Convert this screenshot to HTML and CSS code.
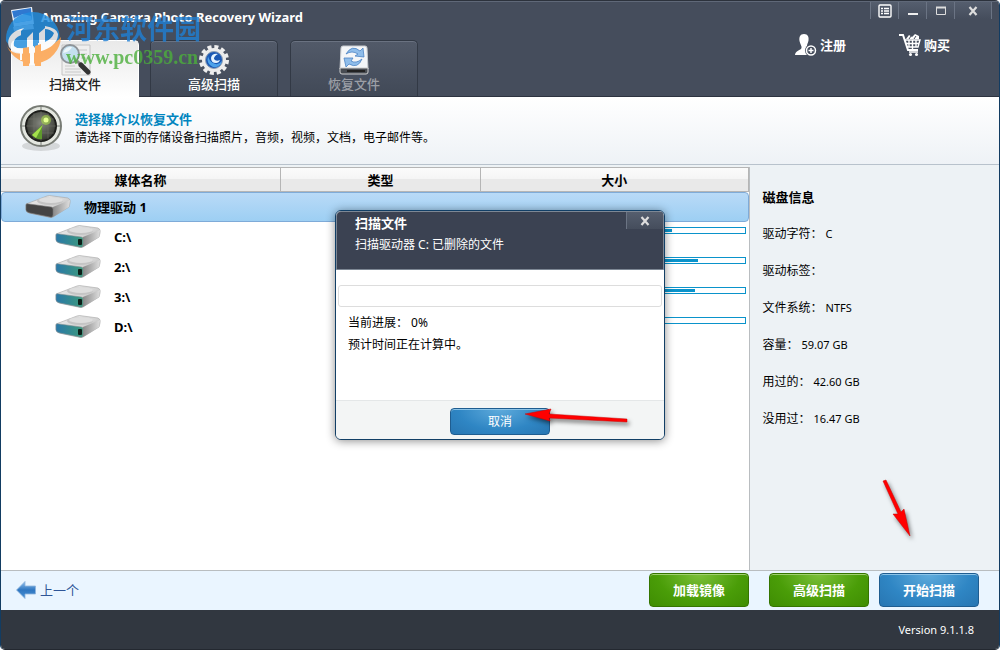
FILE: index.html
```html
<!DOCTYPE html>
<html lang="zh-CN">
<head>
  <meta charset="utf-8">
  <meta name="viewport" content="width=device-width, initial-scale=1.0">
  <title>Amazing Camera Photo Recovery Wizard</title>
  <link rel="stylesheet" href="styles.css">
</head>
<body>
<!-- shared shapes -->
<svg class="defs" width="0" height="0" aria-hidden="true">
  <defs>
    <linearGradient id="silver" x1="0" y1="0" x2="1" y2="1">
      <stop offset="0" stop-color="#f0f0f0"/><stop offset=".55" stop-color="#d2d2d2"/><stop offset="1" stop-color="#8f8f8f"/>
    </linearGradient>
    <linearGradient id="teal" x1="0" y1="0" x2="1" y2="0">
      <stop offset="0" stop-color="#2a78a8"/><stop offset="1" stop-color="#3c9a7c"/>
    </linearGradient>
    <linearGradient id="side" x1="0" y1="0" x2="1" y2="0">
      <stop offset="0" stop-color="#8a8a8a"/><stop offset="1" stop-color="#dedede"/>
    </linearGradient>
    <linearGradient id="arrowBlue" x1="0" y1="0" x2="0" y2="1">
      <stop offset="0" stop-color="#8fc0ee"/><stop offset=".5" stop-color="#2f76c0"/><stop offset="1" stop-color="#4a92d6"/>
    </linearGradient>
    <radialGradient id="lens" cx=".5" cy=".4" r=".6">
      <stop offset="0" stop-color="#85887f"/><stop offset="1" stop-color="#33352f"/>
    </radialGradient>
    <symbol id="drive-body" viewBox="0 0 46 24">
      <path d="M1 9 L22 1 Q24 0 28 1 L43 3 Q46 4 45 8 L44 12 L28 22 Q26 23 23 22 L4 18 Q1 17 1 14Z" fill="url(#silver)" stroke="#a4a4a4" stroke-width=".6"/>
      <path d="M28 12 L45 5 L44 12 L28 22Z" fill="url(#side)"/>
      <ellipse cx="25" cy="6" rx="13" ry="4" fill="#c4c4c4"/>
      <ellipse cx="26" cy="5" rx="12" ry="3" fill="#dedede"/>
    </symbol>
    <symbol id="drive" viewBox="0 0 46 24">
      <use href="#drive-body"/>
      <path d="M1 10 Q1 8 4 9 L26 12 Q28 12 28 14 L28 20 Q28 23 25 22 L5 18 Q1 17 1 15Z" fill="url(#teal)" stroke="#7e8e92" stroke-width=".6"/>
      <rect x="23" y="14" width="4" height="6" rx="1" fill="#0b1f18"/>
    </symbol>
    <symbol id="disk" viewBox="0 0 46 24">
      <use href="#drive-body"/>
      <path d="M1 10 Q1 8 4 9 L26 12 Q28 12 28 14 L28 20 Q28 23 25 22 L5 18 Q1 17 1 15Z" fill="#444" stroke="#777" stroke-width=".6"/>
    </symbol>
  </defs>
</svg>

<div class="window">
  <header class="header">
    <div class="header-left">
      <div class="title">
        <svg class="app-icon" width="24" height="24" viewBox="0 0 24 24" aria-hidden="true">
          <path d="M0 3 L21 0 L23 17 L3 20Z" fill="#f2f5fa"/>
          <path d="M1 4 L20 1 L21 13 L4 16Z" fill="#2f78d0"/>
          <path d="M3 11 L12 7 L20 9 L21 13 L4 16Z" fill="#a9d0f2"/>
          <path d="M2 20 L22 17 L23 22 L3 24Z" fill="#c5cad2"/>
        </svg>
        <h1>Amazing Camera Photo Recovery Wizard</h1>
      </div>
      <nav class="tabs">
        <button class="tab active">
          <svg width="32" height="32" viewBox="0 0 32 32" aria-hidden="true">
            <path d="M3 1 H31 V31 H3Z" fill="#efefef" stroke="#c4c4c4"/>
            <path d="M20 6 H28 M22 10 H28 M22 14 H28 M6 22 H16 M6 25 H22 M6 28 H22" stroke="#c9c9c9"/>
            <path d="M18 17 L23 22" stroke="#888" stroke-width="3"/>
            <path d="M22 21 L29 28" stroke="#333" stroke-width="5" stroke-linecap="round"/>
            <circle cx="11" cy="10" r="9" fill="#b9dcef" fill-opacity=".8" stroke="#8e9499" stroke-width="2"/>
            <path d="M4 9 A8 8 0 0 1 13 3 Q11 8 4 9Z" fill="#fff" fill-opacity=".7"/>
          </svg>
          <span>扫描文件</span>
        </button>
        <button class="tab">
          <svg width="32" height="32" viewBox="0 0 32 32" aria-hidden="true">
            <circle cx="16" cy="16" r="13" fill="none" stroke="#eee" stroke-width="4" stroke-dasharray="4 2.8"/>
            <circle cx="16" cy="16" r="12" fill="#ececec"/>
            <circle cx="16" cy="16" r="8.500" fill="#1a58b4" stroke="#8fa0b4"/>
            <path d="M10 12 Q8 20 15 23 Q22 24 24 17 Q20 22 15 19 Q11 17 10 12Z" fill="#4da2ea"/>
            <path d="M20 10 Q14 9 13 14 Q13 19 18 19 Q21 19 22 16 Q18 18 16 15 Q16 12 20 10Z" fill="#e4f3ff"/>
          </svg>
          <span>高级扫描</span>
        </button>
        <button class="tab" disabled>
          <svg width="32" height="32" viewBox="0 0 32 32" aria-hidden="true">
            <path d="M5 2 H27 Q29 2 29 4 L30 25 H2 L3 4 Q3 2 5 2Z" fill="#f4f6f8" stroke="#c9ccd0"/>
            <path d="M2 24 H30 V28 Q30 30 28 30 H4 Q2 30 2 28Z" fill="#484c52" stroke="#d0d0d0"/>
            <rect x="9" y="26" width="18" height="2" fill="#222"/>
            <path d="M8 10 Q14 0 22 7 L25 4 L26 13 L17 12 L20 10 Q14 6 8 10Z" fill="#8fbdea" stroke="#4c84c4" stroke-width=".8"/>
            <path d="M24 15 Q20 25 11 20 L8 23 L6 14 L15 14 L13 17 Q18 20 24 15Z" fill="#8fbdea" stroke="#4c84c4" stroke-width=".8"/>
          </svg>
          <span>恢复文件</span>
        </button>
      </nav>
    </div>
    <div class="header-right">
      <div class="controls">
        <button class="control" aria-label="Menu">
          <svg width="14" height="14" viewBox="0 0 14 14"><rect x="1" y="1" width="12" height="12" rx="1" fill="none" stroke="#fff" stroke-width="1.4"/><path d="M3 4.5H5M6 4.5H11M3 7H5M6 7H11M3 9.5H5M6 9.5H11" stroke="#fff" stroke-width="1.3"/></svg>
        </button>
        <button class="control" aria-label="Minimize">
          <svg width="12" height="12" viewBox="0 0 12 12"><path d="M1 9H11" stroke="#eee" stroke-width="2"/></svg>
        </button>
        <button class="control" aria-label="Maximize">
          <svg width="12" height="12" viewBox="0 0 12 12"><path d="M1.500 2.500H10.500V9.500H1.500Z" fill="none" stroke="#ddd"/><path d="M1 2.500H11" stroke="#ddd" stroke-width="2"/></svg>
        </button>
        <button class="control close" aria-label="Close">
          <svg width="10" height="10" viewBox="0 0 10 10"><path d="M1.500 1L8.500 9M8.500 1L1.500 9" stroke="#ddd" stroke-width="2.200"/></svg>
        </button>
      </div>
      <div class="links">
        <a href="#register">
          <svg width="24" height="24" viewBox="0 0 24 24" aria-hidden="true">
            <path d="M10 1 C14 1 15 4 14.500 7.500 C14 10 13 11 13 13 C13 15 17 16 18 18 V22 H1 C1 18 7 17 7.500 15 C8 13 6 11 5.500 8 C5 4 6 1 10 1Z" fill="#fff"/>
            <circle cx="17" cy="17.500" r="6" fill="#454d5c"/>
            <circle cx="17" cy="17.500" r="4.500" fill="#454d5c" stroke="#fff" stroke-width="1.500"/>
            <path d="M17 15V20M14.500 17.500H19.500" stroke="#fff" stroke-width="1.500"/>
          </svg>
          注册
        </a>
        <a href="#buy">
          <svg width="24" height="24" viewBox="0 0 24 24" aria-hidden="true" fill="none" stroke="#fff">
            <path d="M1 2H5L10 17H20" stroke-width="2"/>
            <path d="M7 7H22L20 14H9M8 10.500H21M11 7V14M14.500 7V16M18 7V14" stroke-width="1.400"/>
            <path d="M8 6L11 2L14 4L17 1L21 3L21 6Z" fill="#fff" stroke="none"/>
            <path d="M11 6L13 3M16 6L18 3" stroke="#454d5c"/>
            <path d="M11 19H20" stroke-width="1.500"/>
            <circle cx="12.500" cy="21.500" r="1.500" fill="#fff" stroke="none"/><circle cx="18.500" cy="21.500" r="1.500" fill="#fff" stroke="none"/>
          </svg>
          购买
        </a>
      </div>
    </div>
  </header>

  <section class="banner">
    <svg width="50" height="52" viewBox="0 0 50 52" aria-hidden="true">
      <ellipse cx="25" cy="45" rx="19" ry="5" fill="#000" fill-opacity=".12"/>
      <circle cx="25" cy="25" r="20" fill="#e4e7e0" stroke="#777b74" stroke-width="2"/>
      <path d="M25 5V45M5 25H45" stroke="#777b74"/>
      <circle cx="25" cy="25" r="15" fill="url(#lens)" stroke="#1d1e1b" stroke-width="2"/>
      <path d="M18 12V38M25 10V40M32 12V38M12 18H38M10 25H40M12 32H38" stroke="#74776c" stroke-width=".5"/>
      <path d="M26 24L16 34Q20 39 26 38Z" fill="#5f9a2c"/>
      <path d="M27 24L16 34L20 37Z" fill="#a4e04c"/>
      <circle cx="30" cy="19" r="5" fill="#a8d84a" fill-opacity=".6"/>
      <circle cx="30" cy="19" r="2.500" fill="#e4ff90"/>
    </svg>
    <div>
      <h2>选择媒介以恢复文件</h2>
      <p>请选择下面的存储设备扫描照片，音频，视频，文档，电子邮件等。</p>
    </div>
  </section>

  <main class="content">
    <div class="media">
      <table>
        <colgroup><col class="col-name"><col class="col-type"><col class="col-size"></colgroup>
        <thead>
          <tr><th scope="col">媒体名称</th><th scope="col">类型</th><th scope="col">大小</th></tr>
        </thead>
        <tbody>
          <tr class="selected">
            <td colspan="3"><div class="name root"><svg width="46" height="24" aria-hidden="true"><use href="#disk"/></svg>物理驱动 1</div></td>
          </tr>
          <tr>
            <td><div class="name"><svg width="46" height="24" aria-hidden="true"><use href="#drive"/></svg>C:\</div></td>
            <td></td>
            <td class="size"><div class="bar"><div class="fill" style="width: 72%"></div></div></td>
          </tr>
          <tr>
            <td><div class="name"><svg width="46" height="24" aria-hidden="true"><use href="#drive"/></svg>2:\</div></td>
            <td></td>
            <td class="size"><div class="bar"><div class="fill" style="width: 82%"></div></div></td>
          </tr>
          <tr>
            <td><div class="name"><svg width="46" height="24" aria-hidden="true"><use href="#drive"/></svg>3:\</div></td>
            <td></td>
            <td class="size"><div class="bar"><div class="fill" style="width: 81%"></div></div></td>
          </tr>
          <tr>
            <td><div class="name"><svg width="46" height="24" aria-hidden="true"><use href="#drive"/></svg>D:\</div></td>
            <td></td>
            <td class="size"><div class="bar"><div class="fill" style="width: 40%"></div></div></td>
          </tr>
        </tbody>
      </table>
    </div>
    <aside class="info">
      <h2>磁盘信息</h2>
      <dl>
        <div><dt>驱动字符：</dt><dd>C</dd></div>
        <div><dt>驱动标签：</dt><dd></dd></div>
        <div><dt>文件系统：</dt><dd>NTFS</dd></div>
        <div><dt>容量：</dt><dd>59.07 GB</dd></div>
        <div><dt>用过的：</dt><dd>42.60 GB</dd></div>
        <div><dt>没用过：</dt><dd>16.47 GB</dd></div>
      </dl>
    </aside>
  </main>

  <div class="actions">
    <a class="back" href="#back">
      <svg width="20" height="18" viewBox="0 0 20 18" aria-hidden="true"><path d="M0.500 9L9 0.500V5H19.500V13H9V17.500Z" fill="url(#arrowBlue)" stroke="#8fb4dc" stroke-width=".8"/></svg>
      上一个
    </a>
    <button class="btn green load">加载镜像</button>
    <button class="btn green">高级扫描</button>
    <button class="btn blue">开始扫描</button>
  </div>
  <footer class="footer">Version 9.1.1.8</footer>
</div>

<div class="dialog" role="dialog" aria-labelledby="dialog-title">
  <div class="dialog-header">
    <div class="dialog-heading">
      <h2 id="dialog-title">扫描文件</h2>
      <p>扫描驱动器 C: 已删除的文件</p>
    </div>
    <button class="control dialog-close" aria-label="Close">
      <svg width="10" height="10" viewBox="0 0 10 10"><path d="M1.500 1L8.500 9M8.500 1L1.500 9" stroke="#ddd" stroke-width="2.200"/></svg>
    </button>
  </div>
  <div class="dialog-body">
    <div class="scan-progress" role="progressbar" aria-valuenow="0" aria-label="当前进展"></div>
    <p>当前进展： 0%</p>
    <p>预计时间正在计算中。</p>
  </div>
  <div class="dialog-footer">
    <button class="btn blue small">取消</button>
  </div>
</div>

<!-- site watermark -->
<div class="watermark">
  <svg width="58" height="58" viewBox="0 0 58 58" aria-hidden="true">
    <path d="M2 31A27 27 0 0 1 55 22Q57 34 50 38L10 38Q5 36 2 31Z" fill="#1f8de0"/>
    <path d="M57 27A28 28 0 0 1 3 36Q8 46 24 43Q46 40 57 27Z" fill="#ff9f43"/>
    <path d="M5 37C1 25 14 18 23 18L23 24C12 25 9 30 10 36Q16 41 23 38V28L29 22V38L34 36V24L41 18V32Q48 29 50 23Q46 19 41 19V16Q53 18 54 24C54 35 42 41 29 43Q10 45 5 37Z" fill="#fff"/>
    <path d="M17 21L23 15V35H17ZM29 19L35 13V33H29Z" fill="#1f8de0"/>
    <path d="M19 38L25 37V56H19ZM31 36L37 34V56H31Z" fill="#ff9f43"/>
    <path d="M26 37L30 36V55H26ZM16 39H18V50H16Z" fill="#fff"/>
  </svg>
  <div>
    <div class="mark-name">河东软件园</div>
    <div class="mark-url">www.pc0359.cn</div>
  </div>
</div>

<svg class="pointer pointer-cancel" width="112" height="24" viewBox="0 0 112 24" aria-hidden="true">
  <path d="M1 8L27 3L25 8L103 13V16L25 12L26 15Z" fill="red" stroke="#c00" stroke-width=".5"/>
</svg>
<svg class="pointer pointer-start" width="36" height="66" viewBox="0 0 36 66" aria-hidden="true">
  <path d="M3 3L6 2L21 34L24 31L30 58L13 36L18 36Z" fill="red" stroke="#c00" stroke-width=".5"/>
</svg>
</body>
</html>
```
FILE: styles.css
```css
* {
  box-sizing: border-box;
}
body {
  margin: 0;
  position: relative;
  font-family: "Noto Sans", "Noto Sans CJK SC", sans-serif;
  font-size: 12px;
  line-height: 20px;
  color: #000;
  background: #fff;
}
h1, h2, p, dl, dd {
  margin: 0;
}
h1, h2 {
  font-size: 13px;
}
button {
  font: inherit;
  color: inherit;
  border: 0;
  padding: 0;
  background: none;
}
a {
  text-decoration: none;
}
svg {
  flex: none;
}
.defs {
  position: absolute;
}
.window {
  min-height: 100vh;
  display: flex;
  flex-direction: column;
  border: 1px solid #123c62;
  border-top-color: #2c323c;
  border-bottom-color: #232830;
  border-radius: 5px;
  overflow: hidden;
}

/* header */
.header {
  display: flex;
  justify-content: space-between;
  height: 96px;
  color: #fff;
  background: #454d5c;
  border-top: 1px solid #5f6878;
  border-bottom: 1px solid #2d3340;
}
.title {
  display: flex;
  gap: 6px;
  height: 38px;
  padding: 5px 0 0 10px;
}
.tabs {
  display: flex;
  gap: 12px;
  padding-left: 9px;
}
.tab {
  display: flex;
  flex-direction: column;
  align-items: center;
  width: 128px;
  height: 56px;
  padding-top: 3px;
  font-size: 13px;
  font-weight: 500;
  line-height: 16px;
  background: linear-gradient(#525a69, #414957);
  border: 1px solid #323945;
  border-bottom: 0;
  border-radius: 5px 5px 0 0;
  box-shadow: inset 0 1px #6a7281;
}
.tab.active {
  height: 57px;
  margin-left: 1px;
  margin-right: -1px;
  color: #222;
  background: linear-gradient(#e9e9e9, #fff);
  border-color: #fff;
  box-shadow: none;
}
.tab:disabled {
  color: #9c9fa6;
}
.header-right {
  padding-right: 7px;
}
.controls {
  display: flex;
  justify-content: flex-end;
}
.control {
  display: flex;
  align-items: center;
  justify-content: center;
  width: 28px;
  height: 17px;
  background: linear-gradient(#555e6e, #454d5c);
  border-left: 1px solid #6b7484;
}
.close {
  width: 38px;
  border-right: 1px solid #6b7484;
}
.links {
  display: flex;
  gap: 52px;
  padding: 14px 42px 0 0;
}
.links a {
  display: flex;
  align-items: center;
  gap: 2px;
  color: #fff;
  font-size: 13px;
  font-weight: bold;
}

/* banner */
.banner {
  display: flex;
  gap: 9px;
  height: 68px;
  padding: 4px 15px;
  background: linear-gradient(#fff, #eef2f6);
  border-bottom: 1px solid #b8c2cc;
}
.banner h2 {
  margin-top: 9px;
  line-height: 18px;
  color: #0085bf;
}
.banner p {
  line-height: 20px;
}

/* media table and disk info */
.content {
  flex: 1;
  display: flex;
  background: #edf2f5;
}
.media {
  flex: 1;
  margin-top: 2px;
  background: #fff;
  border-right: 1px solid #b9bdc0;
}
.info {
  width: 25%;
  padding: 22px 13px;
}
table {
  width: 100%;
  table-layout: fixed;
  border-collapse: separate;
  border-spacing: 0;
}
.col-name {
  width: 280px;
}
.col-type {
  width: 200px;
}
th {
  height: 25px;
  padding: 0;
  font-size: 13px;
  line-height: 20px;
  background: linear-gradient(#fbfbfb, #f5f5f5 46%, #e9e9e9 47%);
  border: 1px solid #b5b5b5;
  border-left: 0;
}
td {
  height: 30px;
  padding: 0;
}
.selected td {
  background: linear-gradient(#b9daf7, #9dcff3);
  border: 1px solid #7fabd8;
  border-radius: 4px;
}
.name {
  display: flex;
  align-items: center;
  gap: 13px;
  padding-left: 54px;
  font-size: 13px;
  font-weight: bold;
}
.root {
  padding-left: 23px;
}
.size {
  vertical-align: top;
  padding: 5px 3px 0;
}
.bar {
  height: 7px;
  padding: 1px 0;
  border: 1px solid #0a93cb;
}
.fill {
  height: 3px;
  background: #0a93cb;
}
.info h2 {
  line-height: 20px;
  margin-bottom: 17px;
}
.info dl div {
  display: flex;
  gap: 3px;
  height: 37px;
}
.info dd {
  font-size: 11px;
}

/* bottom */
.actions {
  display: flex;
  align-items: center;
  gap: 10px;
  height: 40px;
  padding: 0 20px 2px 15px;
  background: #eaf5ff;
  border-top: 1px solid #b9bdc0;
}
.back {
  display: flex;
  align-items: center;
  gap: 4px;
  margin-right: auto;
  font-size: 13px;
  color: #2f5597;
}
.btn {
  width: 100px;
  height: 34px;
  font-size: 13px;
  font-weight: bold;
  color: #fff;
  border-radius: 4px;
}
.green {
  background: radial-gradient(ellipse at top, #7cc03a, #4a9d08 60%, #3f8d03);
  border: 1px solid #357500;
  box-shadow: inset 0 1px #a0d070;
}
.blue {
  background: radial-gradient(ellipse at top, #5fabdc, #2f86c4 60%, #2876b2);
  border: 1px solid #1f5d90;
  box-shadow: inset 0 1px #8cc4e8;
}
.load {
  margin-right: 10px;
}
.small {
  height: 27px;
  font-size: 12px;
  font-weight: normal;
}
.footer {
  height: 39px;
  padding: 10px 25px;
  font-size: 11px;
  text-align: right;
  color: #fff;
  background: #313740;
}

/* scan dialog, floats over the window */
.dialog {
  position: absolute;
  top: 50%;
  left: 50%;
  transform: translate(-50%, -50%);
  width: 330px;
  background: #fff;
  border: 1px solid #123f66;
  border-radius: 6px;
  overflow: hidden;
  box-shadow: 0 1px 10px rgba(0, 0, 0, .45);
}
.dialog-header {
  display: flex;
  justify-content: space-between;
  height: 59px;
  color: #fff;
  background: #3b4252;
  border: 1px solid #7d8794;
  border-radius: 5px 5px 0 0;
}
.dialog-heading {
  padding: 1px 0 0 18px;
}
.dialog-heading p {
  margin-top: 2px;
}
.dialog-close {
  width: 37px;
}
.dialog-body {
  height: 130px;
  padding: 15px 2px;
}
.scan-progress {
  height: 22px;
  margin-bottom: 5px;
  border: 1px solid #ddd;
  border-radius: 3px;
}
.dialog-body p {
  padding-left: 10px;
  line-height: 22px;
}
.dialog-footer {
  display: flex;
  justify-content: center;
  height: 39px;
  padding-top: 7px;
  background: #f3f5f5;
  border-top: 1px solid #e4e7e8;
}

/* overlays */
.watermark {
  position: absolute;
  top: 10px;
  left: 4px;
  display: flex;
  gap: 4px;
  opacity: .8;
  pointer-events: none;
}
.mark-name {
  font-size: 27px;
  line-height: 38px;
  font-weight: bold;
  color: #1f7fd4;
}
.mark-url {
  font-family: "Liberation Serif", serif;
  font-size: 20px;
  line-height: 18px;
  font-weight: bold;
  color: #4caf3c;
}
.pointer {
  position: absolute;
  pointer-events: none;
  filter: drop-shadow(2px 3px 2px rgba(0, 0, 0, .5));
}
.pointer-cancel {
  top: 406px;
  left: 524px;
}
.pointer-start {
  top: 478px;
  left: 880px;
}
```
